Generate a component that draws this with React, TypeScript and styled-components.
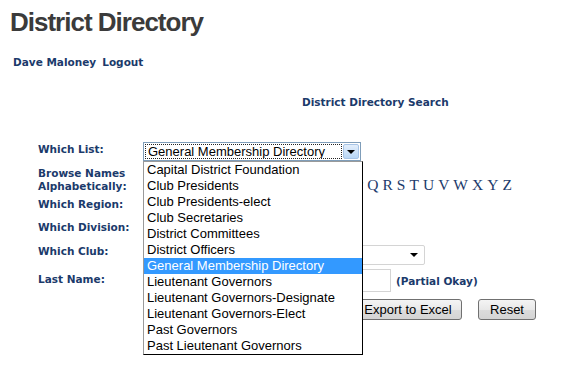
import React from 'react';
import styled, { createGlobalStyle } from 'styled-components';

const LISTS = [
  'Capital District Foundation',
  'Club Presidents',
  'Club Presidents-elect',
  'Club Secretaries',
  'District Committees',
  'District Officers',
  'General Membership Directory',
  'Lieutenant Governors',
  'Lieutenant Governors-Designate',
  'Lieutenant Governors-Elect',
  'Past Governors',
  'Past Lieutenant Governors'
];

const LETTERS = 'ABCDEFGHIJKLMNOPQRSTUVWXYZ'.split('');

const NAVY = '#1b3a6b';
const LABEL_FONT = '"DejaVu Sans", Verdana, sans-serif';
const CONTROL_FONT = '"Liberation Sans", Arial, sans-serif';

const GlobalStyle = createGlobalStyle`
  html, body {
    margin: 0;
    padding: 0;
    background: #fff;
  }
`;

export default function App() {
  const selected = 'General Membership Directory';

  return (
    <Page>
      <GlobalStyle />
      <Title>District Directory</Title>
      <UserBar>
        <UserLink>Dave Maloney</UserLink>
        <UserLink>Logout</UserLink>
      </UserBar>
      <SearchHeading>District Directory Search</SearchHeading>

      <Form>
        <Row $height={20}>
          <Label>Which List:</Label>
          <ListSelect>
            <SelectValue>
              <FocusText>{selected}</FocusText>
            </SelectValue>
            <BlueArrow>
              <Caret />
            </BlueArrow>
            <DropList>
              {LISTS.map((name) => (
                <DropItem key={name} $active={name === selected}>
                  {name}
                </DropItem>
              ))}
            </DropList>
          </ListSelect>
        </Row>

        <Row $height={33} $align="flex-start">
          <Label $twoLine>
            Browse Names
            <br />
            Alphabetically:
          </Label>
          <Letters>
            {LETTERS.map((l) => (
              <Letter key={l}>{l}</Letter>
            ))}
          </Letters>
        </Row>

        <Row $height={24}>
          <Label>Which Region:</Label>
          <PlainSelect $width={180} />
        </Row>

        <Row $height={21}>
          <Label>Which Division:</Label>
          <PlainSelect $width={180} />
        </Row>

        <Row $height={28}>
          <Label>Which Club:</Label>
          <PlainSelect $width={282}>
            <SmallCaret />
          </PlainSelect>
        </Row>

        <Row $height={27}>
          <Label>Last Name:</Label>
          <TextInput />
          <Hint>(Partial Okay)</Hint>
        </Row>

        <ButtonRow>
          <Button $width={108}>Export to Excel</Button>
          <Button $width={58}>Reset</Button>
        </ButtonRow>
      </Form>
    </Page>
  );
}

const Page = styled.div`
  width: 578px;
  height: 370px;
  overflow: hidden;
  padding-top: 7px;
  box-sizing: border-box;
`;

const Title = styled.h1`
  margin: 0 0 0 10px;
  font-family: ${CONTROL_FONT};
  font-size: 26px;
  line-height: 30px;
  font-weight: bold;
  letter-spacing: -1px;
  color: #3b3b3b;
`;

const UserBar = styled.div`
  display: flex;
  gap: 6px;
  margin: 18px 0 0 13px;
  height: 14px;
`;

const UserLink = styled.span`
  font-family: ${LABEL_FONT};
  font-size: 10.5px;
  line-height: 14px;
  font-weight: bold;
  color: ${NAVY};
`;

const SearchHeading = styled.div`
  margin: 26px 0 0 302px;
  font-family: ${LABEL_FONT};
  font-size: 10.5px;
  line-height: 14px;
  font-weight: bold;
  color: ${NAVY};
`;

const Form = styled.div`
  margin-top: 32px;
  padding-left: 38px;
`;

const Row = styled.div<{ $height: number; $align?: string }>`
  display: flex;
  align-items: ${(p) => p.$align || 'center'};
  height: ${(p) => p.$height}px;
`;

const Label = styled.div<{ $twoLine?: boolean }>`
  width: 105px;
  flex: none;
  font-family: ${LABEL_FONT};
  font-size: 10.5px;
  line-height: 13px;
  font-weight: bold;
  color: ${NAVY};
  padding-top: ${(p) => (p.$twoLine ? '6px' : '0')};
  margin-top: ${(p) => (p.$twoLine ? '0' : '-3px')};
`;

const ListSelect = styled.div`
  position: relative;
  z-index: 2;
  display: flex;
  width: 218px;
  height: 19px;
  box-sizing: border-box;
  border: 1px solid #7f9db9;
  background: #fff;
`;

const SelectValue = styled.div`
  flex: 1;
  padding: 1px;
`;

const FocusText = styled.div`
  height: 15px;
  box-sizing: border-box;
  border: 1px dotted #222;
  padding-left: 2px;
  font-family: ${CONTROL_FONT};
  font-size: 13px;
  line-height: 13px;
  color: #000;
  white-space: nowrap;
  overflow: hidden;
`;

const BlueArrow = styled.div`
  width: 16px;
  margin: 1px 1px 1px 0;
  box-sizing: border-box;
  border: 1px solid #a7c4e6;
  border-radius: 2px;
  background: linear-gradient(#e3eefb, #b8d6f5);
  display: flex;
  align-items: center;
  justify-content: center;
`;

const Caret = styled.span`
  width: 0;
  height: 0;
  border-left: 4px solid transparent;
  border-right: 4px solid transparent;
  border-top: 4px solid #000;
  margin-top: 1px;
`;

const DropList = styled.div`
  position: absolute;
  top: 18px;
  left: -1px;
  width: 220px;
  box-sizing: border-box;
  background: #fff;
  border: 1px solid #000;
  border-left-color: #9a9a9a;
  border-top-color: #9a9a9a;
`;

const DropItem = styled.div<{ $active?: boolean }>`
  height: 16px;
  padding-left: 3px;
  font-family: ${CONTROL_FONT};
  font-size: 13px;
  line-height: 16px;
  white-space: nowrap;
  color: ${(p) => (p.$active ? '#fff' : '#000')};
  background: ${(p) => (p.$active ? '#3399ff' : 'transparent')};
`;

const Letters = styled.div`
  display: flex;
  gap: 4px;
  padding-top: 15px;
  font-family: "Liberation Serif", "Times New Roman", serif;
  font-size: 15.5px;
  line-height: 18px;
  color: ${NAVY};
`;

const Letter = styled.span``;

const PlainSelect = styled.div<{ $width: number }>`
  position: relative;
  width: ${(p) => p.$width}px;
  height: 20px;
  box-sizing: border-box;
  border: 1px solid #d4d4d4;
  border-radius: 2px;
  background: #fff;
  display: flex;
  align-items: center;
  justify-content: flex-end;
  padding-right: 6px;
  margin-top: 4px;
`;

const SmallCaret = styled.span`
  width: 0;
  height: 0;
  border-left: 4px solid transparent;
  border-right: 4px solid transparent;
  border-top: 4px solid #000;
`;

const TextInput = styled.div`
  width: 248px;
  height: 23px;
  box-sizing: border-box;
  border: 1px solid #d4d4d4;
  background: #fff;
`;

const Hint = styled.span`
  margin-left: 5px;
  font-family: ${LABEL_FONT};
  font-size: 10.5px;
  font-weight: bold;
  color: ${NAVY};
`;

const ButtonRow = styled.div`
  display: flex;
  gap: 16px;
  margin-top: 5px;
  padding-left: 316px;
`;

const Button = styled.div<{ $width: number }>`
  width: ${(p) => p.$width}px;
  height: 21px;
  box-sizing: border-box;
  border: 1px solid #707070;
  border-radius: 3px;
  background: linear-gradient(#f4f4f4 0%, #e8e8e8 50%, #dcdcdc 51%, #d4d4d4 100%);
  font-family: ${CONTROL_FONT};
  font-size: 13px;
  line-height: 19px;
  text-align: center;
  color: #000;
`;
